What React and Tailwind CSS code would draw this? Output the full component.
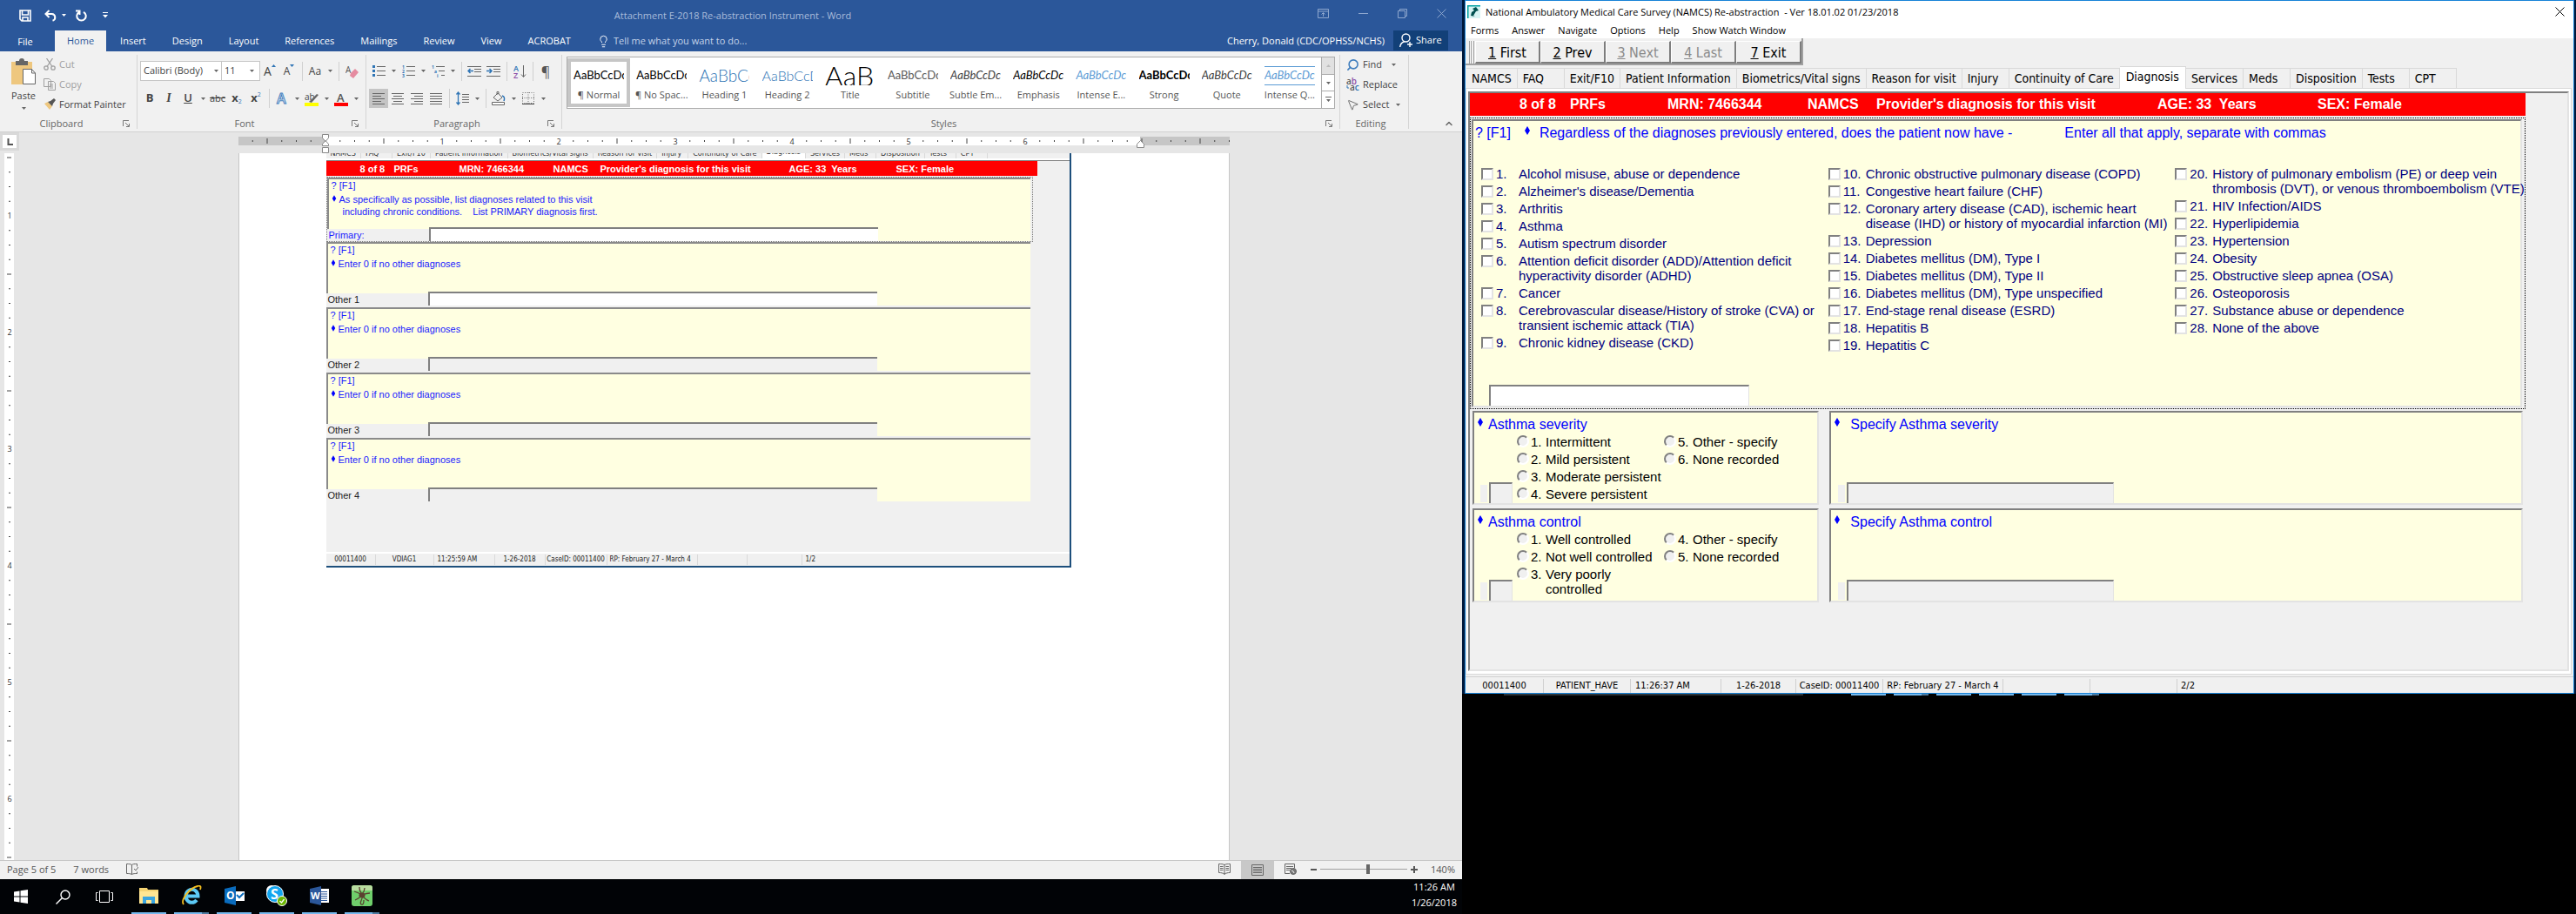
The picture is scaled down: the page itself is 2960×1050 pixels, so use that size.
import { Search, Lightbulb, ChevronUp, MousePointer2 } from 'lucide-react';

const DIAGNOSES = [
  [
    'Alcohol misuse, abuse or dependence',
    "Alzheimer's disease/Dementia",
    'Arthritis',
    'Asthma',
    'Autism spectrum disorder',
    'Attention deficit disorder (ADD)/Attention deficit\nhyperactivity disorder (ADHD)',
    'Cancer',
    'Cerebrovascular disease/History of stroke (CVA) or\ntransient ischemic attack (TIA)',
    'Chronic kidney disease (CKD)'
  ],
  [
    'Chronic obstructive pulmonary disease (COPD)',
    'Congestive heart failure (CHF)',
    'Coronary artery disease (CAD), ischemic heart\ndisease (IHD) or history of myocardial infarction (MI)',
    'Depression',
    'Diabetes mellitus (DM), Type I',
    'Diabetes mellitus (DM), Type II',
    'Diabetes mellitus (DM), Type unspecified',
    'End-stage renal disease (ESRD)',
    'Hepatitis B',
    'Hepatitis C'
  ],
  [
    'History of pulmonary embolism (PE) or deep vein\nthrombosis (DVT), or venous thromboembolism (VTE)',
    'HIV Infection/AIDS',
    'Hyperlipidemia',
    'Hypertension',
    'Obesity',
    'Obstructive sleep apnea (OSA)',
    'Osteoporosis',
    'Substance abuse or dependence',
    'None of the above'
  ]
];
const FIRST_NUMBER = [1, 10, 20];

const SURVEY_TABS = [
  'NAMCS', 'FAQ', 'Exit/F10', 'Patient Information', 'Biometrics/Vital signs', 'Reason for visit', 'Injury',
  'Continuity of Care', 'Diagnosis', 'Services', 'Meds', 'Disposition', 'Tests', 'CPT'
];

const STYLES = [
  { name: '¶ Normal', cls: 'text-[13px] text-black', selected: true },
  { name: '¶ No Spac...', cls: 'text-[13px] text-black' },
  { name: 'Heading 1', text: 'AaBbCc', cls: 'text-[19px] font-light text-[#2e74b5]' },
  { name: 'Heading 2', text: 'AaBbCcD', cls: 'text-base font-light text-[#2e74b5]' },
  { name: 'Title', text: 'AaB', cls: 'text-[32px] font-light text-black' },
  { name: 'Subtitle', cls: 'text-[13px] text-[#5a5a5a]' },
  { name: 'Subtle Em...', cls: 'text-[13px] italic text-[#404040]' },
  { name: 'Emphasis', cls: 'text-[13px] italic text-black' },
  { name: 'Intense E...', cls: 'text-[13px] italic text-[#5b9bd5]' },
  { name: 'Strong', cls: 'text-[13px] font-bold text-black' },
  { name: 'Quote', cls: 'text-[13px] italic text-[#404040]' },
  { name: 'Intense Q...', cls: 'border-y border-[#5b9bd5] text-[13px] italic text-[#5b9bd5]' }
];

/* ---------- small shared pieces ---------- */

const Diamond = ({ className }) => (
  <svg viewBox="0 0 8 10" className={className} fill="#0000ff" aria-hidden="true">
    <path d="M4 0 7 5 4 10 1 5z" />
  </svg>
);

const Caret = () => (
  <span className="flex w-3 shrink-0 justify-center">
    <svg width="5" height="3" fill="#666"><path d="M0 0h5L2.5 3z" /></svg>
  </span>
);

const Divider = () => <span className="flex h-[22px] w-2 shrink-0 justify-center"><span className="w-px bg-[#d0d0d0]" /></span>;

const Tool = ({ label, active, children }) => (
  <button
    type="button"
    aria-label={label}
    className={[
      'flex h-[22px] w-[22px] shrink-0 items-center justify-center text-[#444]',
      active ? 'bg-[#c5c5c5]' : ''
    ].join(' ')}
  >
    {children}
  </button>
);

const Launcher = () => (
  <svg width="8" height="8" stroke="#777" fill="none" className="shrink-0">
    <path d="M.5 7V.5H7M3 3l4 4M7.5 4v3.5H4" />
  </svg>
);

const Lines = ({ rows, color = '#666' }) => (
  <svg width="14" height="13" stroke={color}>
    {rows.map(([x, w], i) => (
      <path key={i} d={`M${x} ${i * 3 + 0.5}h${w}`} />
    ))}
  </svg>
);

/* ---------- Word: title bar and tabs ---------- */

const TitleBar = () => (
  <div className="grid h-[35px] grid-cols-[1fr_auto_1fr] items-center pl-[22px] pr-[18px]">
    <div className="flex items-center">
      <button type="button" aria-label="Save">
        <svg width="14" height="14" fill="none" stroke="#fff" strokeWidth="1.6">
          <path d="M1 1h12v12H3L1 11z" />
          <path d="M3.5 1v5h7V1M4 13V9h6v4" />
        </svg>
      </button>
      <button type="button" aria-label="Undo" className="ml-[15px]">
        <svg width="15" height="14" fill="none" stroke="#fff" strokeWidth="2">
          <path d="M5.5 1 1.5 5l4 4M2 5h6.5a4 4 0 0 1 1 7.8" />
        </svg>
      </button>
      <svg width="5" height="3" fill="#fff" className="ml-[5px]"><path d="M0 0h5L2.5 3z" /></svg>
      <button type="button" aria-label="Repeat" className="ml-[10px]">
        <svg width="14" height="14" fill="none" stroke="#fff" strokeWidth="2">
          <path d="M5 2.8A5.2 5.2 0 1 0 10 2.8M5.5 6V1.5H1" />
        </svg>
      </button>
      <button type="button" aria-label="Customize Quick Access Toolbar" className="ml-[18px]">
        <svg width="6" height="7" fill="#fff"><path d="M0 0h6v1H0zM0 3h6L3 6.5z" /></svg>
      </button>
    </div>
    <h1 className="pt-[1px] text-[11px] text-[#a9bcdb]">Attachment E-2018 Re-abstraction Instrument - Word</h1>
    <div className="flex items-center justify-end gap-[34px] pb-1">
      <svg width="13" height="11" fill="none" stroke="#8ea7ce">
        <path d="M.5.5h12v10H.5zM.5 3h12M6.5 9V5M4.5 6.5l2-2 2 2" />
      </svg>
      <svg width="11" height="11" stroke="#8ea7ce"><path d="M0 5.5h11" /></svg>
      <svg width="11" height="11" fill="none" stroke="#8ea7ce"><path d="M.5 2.5h8v8h-8zM2.5 2.5v-2h8v8h-2" /></svg>
      <svg width="11" height="11" stroke="#8ea7ce"><path d="m.5.5 10 10M10.5.5l-10 10" /></svg>
    </div>
  </div>
);

const WordTabs = () => (
  <div className="flex h-6 items-stretch pr-4 text-[11px] text-white">
    <button type="button" className="w-[58px] pt-[2px]">File</button>
    <div className="ml-[5px] flex gap-[2px]" role="tablist">
      {['Home', 'Insert', 'Design', 'Layout', 'References', 'Mailings', 'Review', 'View', 'ACROBAT'].map((tab) => (
        <button
          key={tab}
          type="button"
          role="tab"
          className={tab === 'Home' ? 'bg-[#f1f1f1] px-[14px] text-[#2b579a]' : 'px-[14px]'}
        >
          {tab}
        </button>
      ))}
    </div>
    <label className="ml-4 flex flex-1 items-center gap-1 text-[#c5d3e9]">
      <Lightbulb size={15} strokeWidth={1.5} className="text-white" />
      <input
        type="text"
        aria-label="Tell me"
        placeholder="Tell me what you want to do..."
        className="w-52 bg-transparent placeholder:text-[#c5d3e9]"
      />
    </label>
    <span className="flex items-center pr-[10px]">Cherry, Donald (CDC/OPHSS/NCHS)</span>
    <button type="button" className="mb-px flex w-[63px] items-center gap-1 bg-[#124078] pl-[7px]">
      <svg width="15" height="17" fill="none" stroke="#fff" strokeWidth="1.4">
        <circle cx="7.5" cy="5.5" r="4.5" />
        <path d="M.7 16c.5-3.5 2.5-5.5 5-6M12 10v6M9 13h6" />
      </svg>
      Share
    </button>
  </div>
);

/* ---------- Word: ribbon ---------- */

const Group = ({ label, launcher = true, className = '', children }) => (
  <section className={`flex flex-col border-r border-[#d5d5d5] ${className}`} aria-label={label}>
    <div className="h-[73px]">{children}</div>
    <div className="flex h-3 items-center pr-2">
      <span className="flex-1 text-center text-[11px] leading-3 text-[#666]">{label}</span>
      {launcher && <Launcher />}
    </div>
  </section>
);

const ClipboardGroup = () => (
  <Group label="Clipboard" className="w-[158px]">
    <div className="flex pl-[11px] pt-[3px] text-[11px] text-[#444]">
      <button type="button" className="flex w-8 flex-col items-center">
        <svg width="30" height="32">
          <path d="M1 5h24v26H1z" fill="#eec77f" />
          <path d="M6 4h4a3 3 0 0 1 6 0h4v5H6z" fill="#666" />
          <path d="M14.5 13.5h10l4 4.5v12.5h-14z" fill="#fff" stroke="#666" />
          <path d="M24.5 13.5V18h4" fill="none" stroke="#666" />
        </svg>
        <span className="pt-1">Paste</span>
        <span className="pt-1"><Caret /></span>
      </button>
      <div className="ml-[7px] flex flex-col gap-[7px]">
        <button type="button" className="flex h-4 items-center gap-1 text-[#a0a0a0]">
          <svg width="14" height="14" fill="none" stroke="#a0a0a0" strokeWidth="1.3">
            <circle cx="3" cy="11" r="2.2" /><circle cx="11" cy="11" r="2.2" />
            <path d="M4 9.500 10.500 0M10 9.500 3.500 0" />
          </svg>
          Cut
        </button>
        <button type="button" className="flex h-4 items-center gap-1 text-[#a0a0a0]">
          <svg width="14" height="14" fill="#f1f1f1" stroke="#a0a0a0">
            <path d="M.5.5h6l2 2v7h-8zM5.500 3.500h6l2 2v8h-8zM7 7h4M7 9h4M7 11h4" />
          </svg>
          Copy
        </button>
        <button type="button" className="flex h-4 items-center gap-1">
          <svg width="14" height="14">
            <path d="m1 6 4-2 5 5-3 4z" fill="#eec77f" />
            <path d="m5 4 3-1 4-3 2 2-3 4-1 3z" fill="#555" />
          </svg>
          Format Painter
        </button>
      </div>
    </div>
  </Group>
);

const FontGroup = () => (
  <Group label="Font" className="w-[263px]">
    <div className="flex flex-col gap-[9px] pl-[3px] pt-[7px]">
      <div className="flex items-center">
        <span className="flex h-[23px] w-[94px] items-center border border-[#c6c6c6] bg-white">
          <select aria-label="Font" className="h-full flex-1 appearance-none pl-[3px] text-[11px] text-[#444]">
            <option>Calibri (Body)</option>
          </select>
          <Caret />
        </span>
        <span className="flex h-[23px] w-[44px] items-center border border-l-0 border-[#c6c6c6] bg-white">
          <select aria-label="Font size" className="h-full w-7 appearance-none pl-[3px] text-[11px] text-[#444]">
            <option>11</option>
          </select>
          <Caret />
        </span>
        <Tool label="Increase font size"><span className="text-sm">A</span><svg width="5" height="3" fill="#2e74b5" className="mb-3"><path d="M0 3h5L2.5 0z" /></svg></Tool>
        <Tool label="Decrease font size"><span className="text-xs">A</span><svg width="5" height="3" fill="#2e74b5" className="mb-3"><path d="M0 0h5L2.5 3z" /></svg></Tool>
        <Divider />
        <Tool label="Change case"><span className="text-xs">Aa</span></Tool>
        <Caret />
        <Divider />
        <Tool label="Clear formatting">
          <svg width="15" height="18">
            <text x="0" y="11" fontSize="10" fill="#555">A</text>
            <path d="m6 11 5-5 4 4-6 7-4-3z" fill="#e58ba0" />
          </svg>
        </Tool>
      </div>
      <div className="flex items-center">
        <Tool label="Bold"><span className="text-[13px] font-bold">B</span></Tool>
        <Tool label="Italic"><span className="font-['Liberation_Serif',serif] text-sm font-bold italic">I</span></Tool>
        <Tool label="Underline"><span className="text-[13px] font-semibold underline">U</span></Tool>
        <Caret />
        <Tool label="Strikethrough"><span className="text-[11px] line-through">abc</span></Tool>
        <Tool label="Subscript"><span className="text-[13px] font-bold">x</span><span className="pt-2 text-[7px] text-[#2e74b5]">2</span></Tool>
        <Tool label="Superscript"><span className="text-[13px] font-bold">x</span><span className="pb-2 text-[7px] text-[#2e74b5]">2</span></Tool>
        <Divider />
        <Tool label="Text effects">
          <svg width="14" height="20"><text x="1" y="16" fontSize="16" fontWeight="600" fill="#fff" stroke="#3f7dbd">A</text></svg>
        </Tool>
        <Caret />
        <Tool label="Highlight">
          <svg width="17" height="18">
            <text x="0" y="11" fontSize="10" fill="#444">ab</text>
            <path d="m5 13 9-9 2 1-8 9z" fill="#666" />
            <path d="M0 14h16v4H0z" fill="#ff0" />
          </svg>
        </Tool>
        <Caret />
        <Tool label="Font color">
          <svg width="16" height="18">
            <text x="3" y="13" fontSize="13" fontWeight="600" fill="#555">A</text>
            <path d="M0 14h16v4H0z" fill="red" />
          </svg>
        </Tool>
        <Caret />
      </div>
    </div>
  </Group>
);

const ListIcon = ({ marks, indent = 0 }) => (
  <svg width="15" height="16">
    {[2, 7, 12].map((y, i) => (
      <g key={y} transform={`translate(${i * indent} 0)`}>
        {marks ? (
          <text x="0" y={y + 3} fontSize="5" fontWeight="700" fill="#2e74b5">{marks[i]}</text>
        ) : (
          <path d={`M0 ${y - 1}h3v3H0z`} fill="#2e74b5" />
        )}
        <path d={`M5 ${y + 0.5}h${10 - i * indent}`} stroke="#666" />
      </g>
    ))}
  </svg>
);

const IndentIcon = ({ arrow }) => (
  <svg width="16" height="12" fill="none">
    <path d="M0 .5h16M8 3.500h8M8 6.500h8M0 11.500h16" stroke="#666" />
    <path d={arrow} stroke="#2e74b5" strokeWidth="1.5" />
  </svg>
);

const ParagraphGroup = () => (
  <Group label="Paragraph" className="w-[225px]">
    <div className="flex flex-col gap-[9px] pl-[3px] pt-[7px]">
      <div className="flex h-[23px] items-center">
        <Tool label="Bullets"><ListIcon /></Tool>
        <Caret />
        <Tool label="Numbering"><ListIcon marks={['1', '2', '3']} /></Tool>
        <Caret />
        <Tool label="Multilevel list"><ListIcon marks={['1', 'a', 'i']} indent={3} /></Tool>
        <Caret />
        <Divider />
        <Tool label="Decrease indent"><IndentIcon arrow="M7 5.500H1M3.500 3 1 5.500 3.500 8" /></Tool>
        <Tool label="Increase indent"><IndentIcon arrow="M0 5.500h6M3.500 3 6 5.500 3.500 8" /></Tool>
        <Divider />
        <Tool label="Sort">
          <svg width="15" height="18">
            <text x="0" y="9" fontSize="9" fontWeight="600" fill="#2e74b5">A</text>
            <text x="0" y="17" fontSize="9" fontWeight="600" fill="#8b4fa8">Z</text>
            <path d="M11.500 2v13M9 12.500l2.500 3 2.500-3" fill="none" stroke="#666" />
          </svg>
        </Tool>
        <Divider />
        <Tool label="Show marks"><span className="text-base text-[#555]">¶</span></Tool>
      </div>
      <div className="flex items-center">
        <Tool label="Align left" active><Lines rows={[[0, 14], [0, 10], [0, 14], [0, 10], [0, 14]]} /></Tool>
        <Tool label="Center"><Lines rows={[[0, 14], [2, 10], [0, 14], [2, 10], [0, 14]]} /></Tool>
        <Tool label="Align right"><Lines rows={[[0, 14], [4, 10], [0, 14], [4, 10], [0, 14]]} /></Tool>
        <Tool label="Justify"><Lines rows={[[0, 14], [0, 14], [0, 14], [0, 14], [0, 14]]} /></Tool>
        <Divider />
        <Tool label="Line spacing">
          <svg width="15" height="16" fill="none">
            <path d="M2.500 1v14M.5 3.500 2.500 1l2 2.500M.5 12.500l2 2.500 2-2.500" stroke="#2e74b5" strokeWidth="1.3" />
            <path d="M7 3.500h8M7 6.500h8M7 9.500h8M7 12.500h8" stroke="#666" />
          </svg>
        </Tool>
        <Caret />
        <Divider />
        <Tool label="Shading">
          <svg width="16" height="16" fill="none" stroke="#666">
            <path d="m2 7 5-5 5 5-5 4zM6 4V.5h2V3" />
            <path d="M12 5c3 1 3 3 2 6" stroke="#2e74b5" strokeWidth="1.5" />
            <path d="M.5 12.500h14v3H.5z" fill="#fff" />
          </svg>
        </Tool>
        <Caret />
        <Tool label="Borders">
          <svg width="14" height="14" fill="none" stroke="#777">
            <path d="M.5.5h13v12H.5zM7 0v13M0 6.500h14" strokeDasharray="1 1.5" />
            <path d="M0 13.500h14" stroke="#444" />
          </svg>
        </Tool>
        <Caret />
      </div>
    </div>
  </Group>
);

const StylesGroup = () => (
  <Group label="Styles" className="min-w-0 flex-1">
    <div className="px-[5px] pt-[2px]">
      <div className="flex h-[60px] border border-[#ababab] bg-white">
        <div className="grid flex-1 grid-cols-12">
          {STYLES.map((style) => (
            <button
              key={style.name}
              type="button"
              className={[
                'my-[1px] flex min-w-0 flex-col items-center',
                style.selected ? 'border-4 border-[#c6c6c6] px-0.5 pt-[5px]' : 'px-1.5 pt-[9px]'
              ].join(' ')}
            >
              <span
                className={`flex h-[22px] w-[58px] items-center overflow-hidden font-['Lato',sans-serif] whitespace-nowrap ${style.cls}`}
              >
                {style.text || 'AaBbCcDc'}
              </span>
              <span className="pt-[3px] text-[11px] leading-4 whitespace-nowrap text-[#555]">{style.name}</span>
            </button>
          ))}
        </div>
        <div className="flex w-[15px] flex-col divide-y divide-[#ababab] border-l border-[#ababab]">
          <button type="button" aria-label="Scroll up" className="flex flex-1 items-center justify-center bg-[#e1e1e1]">
            <svg width="5" height="3" fill="#bbb"><path d="M0 3h5L2.5 0z" /></svg>
          </button>
          <button type="button" aria-label="Scroll down" className="flex flex-1 items-center justify-center"><Caret /></button>
          <button type="button" aria-label="More styles" className="flex flex-1 items-center justify-center">
            <svg width="7" height="7" fill="#666"><path d="M0 0h7v1H0zM1 3h5L3.5 6z" /></svg>
          </button>
        </div>
      </div>
    </div>
  </Group>
);

const EditingGroup = () => (
  <Group label="Editing" launcher={false} className="w-[79px]">
    <div className="flex flex-col gap-[7px] pl-[7px] pt-[3px] text-[11px] text-[#444]">
      <button type="button" className="flex h-4 items-center gap-1">
        <Search size={15} strokeWidth={2.5} className="-scale-x-100 text-[#3f7dbd]" />
        Find
        <span className="pl-1"><Caret /></span>
      </button>
      <button type="button" className="flex h-4 items-center gap-1">
        <svg width="15" height="18" fontSize="10" fontWeight="600">
          <text x="0" y="9" fill="#555">a<tspan fill="#8b4fa8">b</tspan></text>
          <text x="4" y="16" fill="#555">a<tspan fill="#2e74b5">c</tspan></text>
          <path d="M1 10v3h2" fill="none" stroke="#2e74b5" />
        </svg>
        Replace
      </button>
      <button type="button" className="flex h-4 items-center gap-1">
        <MousePointer2 size={15} strokeWidth={1.5} className="text-[#666]" />
        Select
        <Caret />
      </button>
    </div>
  </Group>
);

const Ribbon = () => (
  <div className="flex h-[93px] items-start border-b border-[#d2d2d2] bg-[#f1f1f1] pt-1">
    <ClipboardGroup />
    <FontGroup />
    <ParagraphGroup />
    <StylesGroup />
    <EditingGroup />
    <button type="button" aria-label="Collapse the ribbon" className="flex h-[85px] w-[61px] items-end justify-end pr-[9px]">
      <ChevronUp size={12} strokeWidth={3} className="text-[#666]" />
    </button>
  </div>
);

/* ---------- Word: rulers and document ---------- */

const INCH = 134;

const HorizontalRuler = () => {
  const ticks = [];
  for (let i = -5; i <= 62; i += 1) {
    const x = 100 + (i * INCH) / 8;
    if (i % 8 === 0 && i > 0 && i < 56) {
      ticks.push(<text key={i} x={x} y="9" fontSize="9" textAnchor="middle" fill="#333">{i / 8}</text>);
    } else if (i !== 0) {
      ticks.push(<path key={i} d={i % 4 === 0 ? `M${x} 2v6` : `M${x} 4v2`} stroke="#444" />);
    }
  }
  return (
    <svg width="1139" height="24" className="shrink-0">
      <path d="M0 5h1139v10H0z" fill="#c6c6c6" />
      <path d="M100 5h936v10H100z" fill="#fff" />
      <g transform="translate(0 5)">{ticks}</g>
      <g fill="#fff" stroke="#888">
        <path d="M96.500 2.500h7v4l-3.500 4-3.500-4zM96.500 15.500v-2l3.500-4 3.500 4v2zM96.500 17.500h7v6h-7z" />
        <path d="M1032.500 17.500v-4l4-4 4 4v4z" />
      </g>
    </svg>
  );
};

const VerticalRuler = () => {
  const ticks = [];
  for (let i = 0; i < 49; i += 1) {
    const y = 5 + (i * INCH) / 8;
    if (i % 8 === 4) {
      ticks.push(<text key={i} x="6" y={y + 3} fontSize="9" textAnchor="middle" fill="#333">{(i + 4) / 8}</text>);
    } else {
      ticks.push(<path key={i} d={i % 4 === 0 ? `M3 ${y}h5` : `M5 ${y}h2`} stroke="#444" />);
    }
  }
  return <svg width="11" height="811">{ticks}</svg>;
};

const OTHER_ROWS = [
  { label: 'Primary:', lines: ['As specifically as possible, list diagnoses related to this visit', 'including chronic conditions.    List PRIMARY diagnosis first.'], open: true, primary: true },
  { label: 'Other 1', lines: ['Enter 0 if no other diagnoses'], open: true },
  { label: 'Other 2', lines: ['Enter 0 if no other diagnoses'] },
  { label: 'Other 3', lines: ['Enter 0 if no other diagnoses'] },
  { label: 'Other 4', lines: ['Enter 0 if no other diagnoses'] }
];

const DiagnosisRow = ({ row }) => (
  <div className={row.primary ? 'mr-[42px] border border-dotted border-[#777] pr-[2px]' : 'mr-[45px] pb-[2px]'}>
    <div className="flex h-[73px] flex-col border-l-2 border-t-2 border-[#8a8a8a] bg-[#ffffe1]">
      <p className="pl-[3px] text-[11px] leading-[14px] text-[#1a1aff]">? [F1]</p>
      <div className="flex flex-1 items-start gap-[3px] pl-[3px] pt-[2px] text-[11px] leading-[14px] text-[#1a1aff]">
        <Diamond className="mt-[2px] h-2 w-[6px]" />
        <p className="whitespace-pre">
          {row.lines[0]}
          {row.lines[1] && <span className="block pl-1">{row.lines[1]}</span>}
        </p>
      </div>
      <div className="-ml-[2px] flex items-end text-[11px] leading-[14px]">
        <label
          htmlFor={row.label}
          className={`w-[117px] bg-[#f0f0f0] pl-[2px] ${row.primary ? 'text-[#1a1aff]' : 'text-[#222]'}`}
        >
          {row.label}
        </label>
        <input
          id={row.label}
          type="text"
          disabled={!row.open}
          className={`h-4 w-[516px] border-l-2 border-t-2 border-[#808080] ${row.open ? 'bg-white' : 'bg-[#f0f0f0]'}`}
        />
      </div>
    </div>
  </div>
);

const PastedScreenshot = () => (
  <div className="ml-[100px] w-[856px] border-b-2 border-r-2 border-[#1d4f7c] bg-[#f0f0f0] font-['Liberation_Sans',sans-serif]">
    <div className="flex h-[6px] items-end overflow-hidden font-['DejaVu_Sans_Condensed','DejaVu_Sans',sans-serif] text-[9px] leading-[12px] whitespace-nowrap text-[#333]">
      {SURVEY_TABS.map((tab) => (
        <span
          key={tab}
          className={[
            'min-w-9 border-r border-[#d9d9d9] px-[5px]',
            tab === 'Diagnosis' ? 'bg-white pb-[2px]' : ''
          ].join(' ')}
        >
          {tab}
        </span>
      ))}
    </div>
    <div className="h-[3px] border-b border-[#808080] bg-white" />
    <div className="mr-[37px] grid h-[17px] grid-cols-[39px_75px_108px_54px_217px_123px_auto] items-center bg-[#ff0000] pl-[39px] text-[11px] leading-4 font-bold whitespace-pre text-white">
      <span>8 of 8</span>
      <span>PRFs</span>
      <span>MRN: 7466344</span>
      <span>NAMCS</span>
      <span>Provider's diagnosis for this visit</span>
      <span>{'AGE: 33  Years'}</span>
      <span>SEX: Female</span>
    </div>
    <div className="pt-px">
      {OTHER_ROWS.map((row) => <DiagnosisRow key={row.label} row={row} />)}
    </div>
    <div className="h-[56px]" />
    <div className="h-[2px] bg-white" />
    <div className="flex h-[14px] items-center divide-x divide-[#d9d9d9] font-['DejaVu_Sans_Condensed','DejaVu_Sans',sans-serif] text-[8px] leading-[12px] whitespace-nowrap text-[#222]">
      <span className="w-[57px] text-center">00011400</span>
      <span className="w-[67px] text-center">VDIAG1</span>
      <span className="w-[70px] pl-1">11:25:59 AM</span>
      <span className="w-[58px] text-center">1-26-2018</span>
      <span className="w-[71px] text-center">CaseID: 00011400</span>
      <span className="w-[104px] pl-[3px]">RP: February 27 - March 4</span>
      <span className="w-[57px]">&nbsp;</span>
      <span className="w-[63px]">&nbsp;</span>
      <span className="pl-1">1/2</span>
    </div>
  </div>
);

const DocumentArea = () => (
  <main className="flex flex-1 flex-col bg-[#e6e6e6]">
    <div className="flex h-6 items-start">
      <button type="button" aria-label="Tab selector" className="h-[21px] w-[22px] shrink-0 bg-[#d9d9d9] p-[3px]">
        <svg width="16" height="15" className="bg-white"><path d="M6.500 4v7H12" fill="none" stroke="#555" strokeWidth="2" /></svg>
      </button>
      <div className="flex flex-1 justify-center pr-4"><HorizontalRuler /></div>
    </div>
    <div className="flex flex-1">
      <div className="mr-[6px] ml-[5px] w-[11px] shrink-0 bg-white"><VerticalRuler /></div>
      <div className="flex flex-1 justify-center pr-4">
        <article className="w-[1139px] border-x border-[#c6c6c6] bg-white">
          <PastedScreenshot />
        </article>
      </div>
    </div>
  </main>
);

const StatusBar = () => (
  <footer className="flex h-[22px] items-center border-t border-[#c6c6c6] bg-[#f1f1f1] pb-[2px] pl-2 pr-2 text-[11px] leading-4 text-[#555]">
    <span>Page 5 of 5</span>
    <span className="pl-5">7 words</span>
    <svg width="14" height="13" fill="none" stroke="#666" className="ml-5">
      <path d="M6.500 1.500C5 .5 3 .5.5.5v11c2.500 0 4 0 6 1zM6.500 1.500C8 .5 9 .5 12.500.5v3M6.500 12.500c2-1 3-1 6-1v-2M9 6l2 2 3-4" />
    </svg>
    <div className="flex flex-1 items-center justify-end">
      <button type="button" aria-label="Read mode" className="flex w-[38px] justify-center">
        <svg width="14" height="13" fill="none" stroke="#666">
          <path d="M7 1.500C5 .5 3 .5.5.5v10c3 0 4.500.5 6.500 1.500 2-1 3.500-1.500 6.500-1.500V.5C11 .5 9 .5 7 1.500zM7 1v12M2 3.500h3.500M2 5.500h3.500M2 7.500h3.500M8.500 3.500H12M8.500 5.500H12M8.500 7.500H12" />
        </svg>
      </button>
      <button type="button" aria-label="Print layout" className="-mb-[2px] flex h-[21px] w-[38px] items-center justify-center bg-[#c8c8c8]">
        <svg width="14" height="13" fill="none" stroke="#666"><path d="M.5.5h13v12H.5zM2 3.500h10M2 5.500h10M2 7.500h10M2 9.500h10" /></svg>
      </button>
      <button type="button" aria-label="Web layout" className="flex w-[38px] justify-center">
        <svg width="14" height="13" fill="none" stroke="#666">
          <path d="M6 11.500H.5V.5h11v5M2 3.500h8M2 5.500h6M2 7.500h4" />
          <circle cx="10" cy="9" r="3.5" fill="#777" />
          <path d="M8 8l2 1 1 2" stroke="#f1f1f1" />
        </svg>
      </button>
      <button type="button" aria-label="Zoom out" className="mx-1 h-[2px] w-[7px] bg-[#555]" />
      <input
        type="range"
        aria-label="Zoom"
        min="0"
        max="100"
        defaultValue="55"
        className="h-3 w-[100px] appearance-none bg-[linear-gradient(#a0a0a0,#a0a0a0)] bg-[length:100%_1px] bg-center bg-no-repeat [&::-webkit-slider-thumb]:h-[11px] [&::-webkit-slider-thumb]:w-1 [&::-webkit-slider-thumb]:appearance-none [&::-webkit-slider-thumb]:bg-[#666]"
      />
      <button type="button" aria-label="Zoom in" className="mx-1">
        <svg width="8" height="8" stroke="#555" strokeWidth="2"><path d="M4 0v8M0 4h8" /></svg>
      </button>
      <span className="w-[39px] text-right">140%</span>
    </div>
  </footer>
);

/* ---------- Windows taskbar ---------- */

const APPS = [
  {
    name: 'File Explorer',
    icon: (
      <svg width="22" height="18">
        <path d="M0 0h9l1 2h12v16H0z" fill="#f5d473" />
        <path d="M0 4h22v14H0z" fill="#ffe693" />
        <path d="M4 18v-8h14v8h-4v-4H8v4z" fill="#3aa5e0" />
      </svg>
    )
  },
  {
    name: 'Internet Explorer',
    split: true,
    icon: (
      <svg width="24" height="24" fill="none">
        <path d="M5.500 12.500h14A7 7.500 0 1 0 18 17" stroke="#5cc9f5" strokeWidth="4" />
        <path d="M3 22C-1 17 10 3 19 1c4-1 4 1 3 4" stroke="#f4bf1f" strokeWidth="1.8" />
      </svg>
    )
  },
  {
    name: 'Outlook',
    icon: (
      <svg width="23" height="22">
        <path d="M11 6h12v11H11z" fill="#fff" />
        <path d="m14 10 3 3 5-5" fill="none" stroke="#0a6cbd" strokeWidth="2" />
        <path d="M0 3 13 0v22L0 19z" fill="#0a6cbd" />
        <text x="2" y="15" fontSize="12" fontWeight="700" fill="#fff">O</text>
      </svg>
    )
  },
  {
    name: 'Skype',
    icon: (
      <svg width="26" height="26">
        <circle cx="7" cy="7" r="6" fill="#fff" /><circle cx="15" cy="15" r="6" fill="#fff" />
        <circle cx="11" cy="11" r="9.5" fill="#12a5f0" stroke="#fff" />
        <text x="6" y="17" fontSize="16" fontWeight="700" fill="#fff">S</text>
        <circle cx="19" cy="19" r="5.5" fill="#6bb700" stroke="#fff" />
        <path d="m16.500 19 2 2 3-4" fill="none" stroke="#fff" strokeWidth="1.3" />
      </svg>
    )
  },
  {
    name: 'Word',
    icon: (
      <svg width="22" height="22">
        <path d="M10 3h12v16H10z" fill="#fff" />
        <path d="M13 6.500h7M13 9h7M13 11.500h7M13 14h7M13 16.500h7" stroke="#2b579a" />
        <path d="M0 3 13 0v22L0 19z" fill="#2b579a" />
        <text x="1" y="15" fontSize="11" fontWeight="700" fill="#fff">W</text>
      </svg>
    )
  },
  {
    name: 'Blaise',
    split: true,
    icon: (
      <svg width="24" height="24">
        <rect width="24" height="24" rx="3" fill="#6fcf6b" />
        <path d="M0 3a3 3 0 0 1 3-3h18a3 3 0 0 1 3 3v3H0z" fill="#b9dda0" />
        <path d="M9 2c0 4 1 6 3 8M15 3c0 3-1 5-3 7M3 7c3 1 6 2 9 4M21 9c-3 0-6 1-9 2M4 17c3-1 5-3 8-5M20 18c-3-1-5-3-8-6M12 12c2 4-4 7-1 10 3 1 3-3 3-5" fill="none" stroke="#5b4030" strokeWidth="1.3" />
        <ellipse cx="12" cy="11.5" rx="3.5" ry="3" fill="#5b4030" />
      </svg>
    )
  }
];

const Taskbar = () => (
  <nav className="flex h-10 bg-[#010306]" aria-label="Taskbar">
    <button type="button" aria-label="Start" className="flex w-12 items-center justify-center">
      <svg width="16" height="16" fill="#fff"><path d="M0 2.500 6.500 1.500v6H0zM7.500 1.300 16 0v7.500H7.500zM0 8.500h6.500v6L0 13.500zM7.500 8.500H16V16l-8.500-1.300z" /></svg>
    </button>
    <button type="button" aria-label="Search" className="flex w-12 items-center justify-center">
      <svg width="17" height="17" fill="none" stroke="#fff" strokeWidth="1.4"><circle cx="11" cy="6" r="5" /><path d="M7.500 9.500.5 16.500" /></svg>
    </button>
    <button type="button" aria-label="Task view" className="flex w-12 items-center justify-center">
      <svg width="20" height="15" fill="none" stroke="#fff"><path d="M4.500.5h11v13h-11zM2.500 2.500h-2v9h2M17.500 2.500h2v9h-2" /></svg>
    </button>
    <div className="flex gap-[9px] pl-[7px]">
      {APPS.map((app) => (
        <button key={app.name} type="button" aria-label={app.name} className="flex w-10 flex-col">
          <span className="flex flex-1 items-center justify-center">{app.icon}</span>
          <span className="flex h-[2px] bg-[#76b9ed]">
            {app.split && <span className="ml-auto w-2 bg-[#4d7a9e]" />}
          </span>
        </button>
      ))}
    </div>
    <time className="mr-[6px] ml-auto text-center text-[11px] leading-[18px] text-white">
      11:26 AM
      <br />
      1/26/2018
    </time>
  </nav>
);

/* ---------- Survey window ---------- */

const SurveyButtons = () => (
  <div className="flex h-8 items-start">
    <div className="flex h-[31px] items-end border-b-2 border-r-2 border-[#a0a0a0] bg-[#f0f0f0] pl-1">
      <span className="mr-px h-[26px] w-[3px] border-x border-[#a0a0a0] bg-white" />
      <span className="mr-px h-[26px] w-[2px] border-r border-[#a0a0a0]" />
      {['1 First', '2 Prev', '3 Next', '4 Last', '7 Exit'].map((label) => {
        const off = label === '3 Next' || label === '4 Last';
        return (
          <button
            key={label}
            type="button"
            disabled={off}
            className={[
              'h-[26px] w-[75px] border-b-2 border-l border-r-2 border-t border-b-[#7d7d7d] border-l-white border-r-[#7d7d7d] border-t-white pt-[3px]',
              "font-['DejaVu_Sans_Condensed','DejaVu_Sans',sans-serif] text-base leading-5",
              off ? 'text-[#8a8a8a]' : 'text-black'
            ].join(' ')}
          >
            <u>{label[0]}</u>
            {label.slice(1)}
          </button>
        );
      })}
    </div>
  </div>
);

const SurveyTabs = () => (
  <div className="flex items-end pl-px" role="tablist">
    {SURVEY_TABS.map((tab) => (
      <button
        key={tab}
        type="button"
        role="tab"
        aria-selected={tab === 'Diagnosis'}
        className={[
          "min-w-[54px] border-r border-t border-[#d9d9d9] text-left font-['DejaVu_Sans_Condensed','DejaVu_Sans',sans-serif] text-sm whitespace-nowrap text-black",
          tab === 'Diagnosis' ? '-mb-px h-[26px] bg-white px-[7px] pb-1' : 'h-[23px] px-[6px]'
        ].join(' ')}
      >
        {tab}
      </button>
    ))}
  </div>
);

const Panel = ({ className = '', children }) => (
  <div
    className={`border-2 border-b-[#e3e3e3] border-l-[#808080] border-r-[#e3e3e3] border-t-[#808080] bg-[#ffffe1] ${className}`}
  >
    {children}
  </div>
);

const DiagnosisList = () => (
  <div className="-mr-[2px] mt-7 grid grid-cols-3 pl-[9px] text-[15px] leading-[17px] text-[#000080]">
    {DIAGNOSES.map((column, c) => (
      <div key={FIRST_NUMBER[c]} className="flex h-[214px] min-w-0 flex-col gap-[3px]">
        {column.map((text, i) => (
          <label key={text} className="flex items-start whitespace-pre">
            <input
              type="checkbox"
              className="mr-[3px] mt-[2px] h-[14px] w-[14px] shrink-0 appearance-none border-2 border-b-[#e3e3e3] border-l-[#808080] border-r-[#e3e3e3] border-t-[#808080] bg-white"
            />
            <span className="w-[26px] shrink-0">{FIRST_NUMBER[c] + i}.</span>
            <span>{text}</span>
          </label>
        ))}
      </div>
    ))}
  </div>
);

const PanelTitle = ({ wide, children }) => (
  <h2 className={`flex h-[25px] items-start pl-[3px] pt-1 text-base leading-5 text-[#0000ff] ${wide ? 'gap-[11px]' : 'gap-[5px]'}`}>
    <Diamond className="mt-[2px] h-[10px] w-2" />
    {children}
  </h2>
);

const RadioPanel = ({ title, name, columns }) => (
  <Panel className="h-[108px]">
    <PanelTitle>{title}</PanelTitle>
    <div className="flex h-[79px] pl-[7px]">
      <div className="flex items-end gap-[2px]">
        <span className="mb-px h-5 w-2 bg-[#f0f0f0]" />
        <input
          type="text"
          disabled
          aria-label={title}
          className="h-6 w-[27px] border-l-2 border-r border-t-2 border-l-[#808080] border-r-[#e3e3e3] border-t-[#808080] bg-[#f0f0f0]"
        />
      </div>
      <div className="grid flex-1 grid-cols-[169px_1fr] pl-[5px] text-[15px] leading-[17px] text-black">
        {columns.map((options, c) => (
          <div key={options[0]} className="flex flex-col gap-[3px]">
            {options.map((text, i) => (
              <label key={text} className="flex items-start">
                <input
                  type="radio"
                  name={name}
                  className="mr-[2px] mt-px h-[14px] w-[14px] shrink-0 appearance-none rounded-full border-2 border-b-[#fff] border-l-[#808080] border-r-[#fff] border-t-[#808080] bg-[#f0f0f0]"
                />
                <span className="w-[17px] shrink-0">{(c ? columns[0].length : 0) + i + 1}.</span>
                <span>{text}</span>
              </label>
            ))}
          </div>
        ))}
      </div>
    </div>
  </Panel>
);

const SpecifyPanel = ({ title }) => (
  <Panel className="h-[108px]">
    <PanelTitle wide>{title}</PanelTitle>
    <div className="flex h-[79px] items-end gap-[2px] pl-2">
      <span className="mb-px h-5 w-2 bg-[#f0f0f0]" />
      <input
        type="text"
        disabled
        aria-label={title}
        className="h-6 w-[307px] border-l-2 border-r border-t-2 border-l-[#808080] border-r-[#e3e3e3] border-t-[#808080] bg-[#f0f0f0]"
      />
    </div>
  </Panel>
);

const SurveyStatus = () => (
  <footer className="mt-[2px] flex h-[19px] items-center divide-x divide-[#d0d0d0] border-t border-[#d0d0d0] pt-[2px] font-['DejaVu_Sans_Condensed','DejaVu_Sans',sans-serif] text-[11px] leading-4 whitespace-nowrap text-black">
    <span className="w-[90px] text-center">00011400</span>
    <span className="w-[100px] text-center">PATIENT_HAVE</span>
    <span className="w-[104px] pl-[5px]">11:26:37 AM</span>
    <span className="w-[86px] text-center">1-26-2018</span>
    <span className="w-[100px] text-center">CaseID: 00011400</span>
    <span className="w-[138px] text-center">RP: February 27 - March 4</span>
    <span className="w-[100px]">&nbsp;</span>
    <span className="w-[100px]">&nbsp;</span>
    <span className="pl-1">2/2</span>
  </footer>
);

const SurveyWindow = () => (
  <div className="border border-[#1883d7] bg-[#f0f0f0] font-['Liberation_Sans',sans-serif]">
    <header className="bg-white font-['Open_Sans',sans-serif] text-[11px] leading-4 text-black">
      <div className="flex h-[25px] items-center pl-[2px] pr-[10px]">
        <svg width="15" height="15" className="bg-[#d7f4f4]">
          <path d="M.5 15V.5H15" fill="none" stroke="#00a0a0" strokeWidth="2" />
          <path d="m6 4 4-2 3 4-3 1-3 5 2 1-5-1 1-4 3-2z" fill="#005050" />
        </svg>
        <h1 className="flex-1 pl-[6px] whitespace-pre">
          {'National Ambulatory Medical Care Survey (NAMCS) Re-abstraction  - Ver 18.01.02 01/23/2018'}
        </h1>
        <button type="button" aria-label="Close">
          <svg width="11" height="11" stroke="#000"><path d="m.5.5 10 10M10.5.5l-10 10" /></svg>
        </button>
      </div>
      <div className="flex h-[18px] items-center gap-[15px] pl-[6px]" role="menubar">
        {['Forms', 'Answer', 'Navigate', 'Options', 'Help', 'Show Watch Window'].map((item) => (
          <button key={item} type="button" role="menuitem">{item}</button>
        ))}
      </div>
    </header>
    <SurveyButtons />
    <SurveyTabs />
    <div className="mr-[2px] border border-[#d9d9d9] bg-white px-[2px] py-[3px]">
      <div className="border-2 border-b-[#e3e3e3] border-l-[#808080] border-r-[#e3e3e3] border-t-[#808080] bg-[#f0f0f0] pb-[77px]">
        <div className="mr-12 grid h-[26px] grid-cols-[58px_112px_161px_79px_323px_184px_auto] items-center bg-[#ff0000] pl-[57px] text-base font-bold whitespace-pre text-white">
          <span>8 of 8</span>
          <span>PRFs</span>
          <span>MRN: 7466344</span>
          <span>NAMCS</span>
          <span>Provider's diagnosis for this visit</span>
          <span>{'AGE: 33  Years'}</span>
          <span>SEX: Female</span>
        </div>
        <div className="mr-12 mt-[2px] border border-dotted border-black py-px pl-px pr-[3px]">
          <Panel>
            <p className="flex items-start pl-[2px] pt-1 text-base leading-5 text-[#0000ff]">
              ? [F1]
              <Diamond className="ml-[15px] mr-[10px] mt-[2px] h-[10px] w-2" />
              Regardless of the diagnoses previously entered, does the patient now have -
              <span className="pl-[60px]">Enter all that apply, separate with commas</span>
            </p>
            <DiagnosisList />
            <input
              type="text"
              aria-label="Diagnosis codes"
              className="ml-[18px] mt-[37px] block h-6 w-[299px] border-l-2 border-r border-t-2 border-l-[#808080] border-r-[#e3e3e3] border-t-[#808080] bg-white px-[2px] outline-none"
              autoFocus
            />
          </Panel>
        </div>
        <div className="ml-[3px] mr-[51px] mt-[2px] grid grid-cols-[1fr_2fr] gap-x-3 gap-y-1">
          <RadioPanel
            title="Asthma severity"
            name="severity"
            columns={[
              ['Intermittent', 'Mild persistent', 'Moderate persistent', 'Severe persistent'],
              ['Other - specify', 'None recorded']
            ]}
          />
          <SpecifyPanel title="Specify Asthma severity" />
          <RadioPanel
            title="Asthma control"
            name="control"
            columns={[
              ['Well controlled', 'Not well controlled', 'Very poorly controlled'],
              ['Other - specify', 'None recorded']
            ]}
          />
          <SpecifyPanel title="Specify Asthma control" />
        </div>
      </div>
    </div>
    <SurveyStatus />
  </div>
);

// Sliver of the second monitor's taskbar that shows under the window
const HiddenTaskbar = () => (
  <div className="flex h-[2px] gap-[9px] pl-[48px]">
    <span className="mr-[46px] w-[344px] bg-[#2b3338]" />
    {[false, true, false, false, false, true].map((split, i) => (
      <span key={i} className="flex w-10 bg-[#76b9ed]">
        {split && <span className="ml-auto w-2 bg-[#4d7a9e]" />}
      </span>
    ))}
  </div>
);

export default function App() {
  return (
    <div className="grid min-h-screen grid-cols-[21fr_16fr] bg-black">
      <div className="flex min-w-0 flex-col font-['Open_Sans',sans-serif]">
        <div className="bg-[#2b579a]">
          <TitleBar />
          <WordTabs />
        </div>
        <Ribbon />
        <DocumentArea />
        <StatusBar />
        <Taskbar />
      </div>
      <div className="min-w-0">
        <div className="bg-[#00183a] pl-[3px] pr-[2px]">
          <SurveyWindow />
        </div>
        <HiddenTaskbar />
      </div>
    </div>
  );
}
